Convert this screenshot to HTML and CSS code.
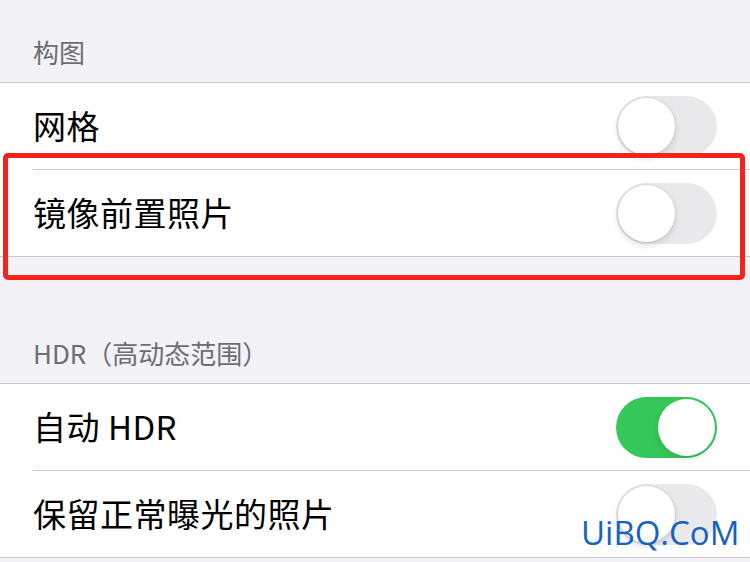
FILE: index.html
```html
<!DOCTYPE html>
<html>
  <head>
    <title>相机设置</title>
    <meta name="viewport" content="width=device-width, initial-scale=1.0">
    <link rel="stylesheet" href="styles.css">
  </head>
  <body>
    <div class="section-title first">构图</div>
    <div class="group">
      <div class="row">
        <span class="label">网格</span>
        <span class="switch"><span class="knob"></span></span>
      </div>
      <div class="row">
        <span class="label">镜像前置照片</span>
        <span class="switch"><span class="knob"></span></span>
      </div>
    </div>

    <div class="section-title">HDR（高动态范围）</div>
    <div class="group">
      <div class="row">
        <span class="label">自动 HDR</span>
        <span class="switch on"><span class="knob"></span></span>
      </div>
      <div class="row">
        <span class="label">保留正常曝光的照片</span>
        <span class="switch"><span class="knob"></span></span>
      </div>
    </div>

    <div class="highlight"></div>
    <div class="watermark">UiBQ.CoM</div>
  </body>
</html>
```

FILE: styles.css
```css
body {
  background-color: #f2f2f7;
  margin: 0;
  padding: 0;
  font-family: "Noto Sans CJK SC", "Noto Sans", sans-serif;
  position: relative;
  height: 562px;
  overflow: hidden;
}
.section-title {
  height: 126px;
  box-sizing: border-box;
  padding: 0 33px 14px;
  display: flex;
  align-items: flex-end;
  font-size: 26px;
  line-height: 32px;
  color: #6d6d72;
}
.section-title.first {
  height: 82px;
}
.group {
  background-color: white;
  border-top: 1px solid #c8c7cc;
  border-bottom: 1px solid #c8c7cc;
}
.row {
  height: 87px;
  box-sizing: border-box;
  margin-left: 33px;
  padding-right: 33px;
  display: flex;
  align-items: center;
  justify-content: space-between;
  border-bottom: 1px solid #c8c7cc;
}
.row:last-child {
  height: 86px;
  border-bottom: none;
}
.label {
  font-size: 33px;
  color: #000;
  letter-spacing: 0.5px;
  padding-bottom: 2px;
}
.switch {
  position: relative;
  width: 101px;
  height: 61px;
  border-radius: 31px;
  background-color: #e9e9eb;
  flex: none;
}
.switch .knob {
  position: absolute;
  top: 2px;
  left: 2px;
  width: 57px;
  height: 57px;
  border-radius: 50%;
  background-color: white;
  box-shadow: 0 3px 7px rgba(0, 0, 0, 0.14), 0 0 0 1px rgba(0, 0, 0, 0.05);
}
.switch.on {
  background-color: #35c759;
}
.switch.on .knob {
  left: 42px;
  box-shadow: 0 3px 7px rgba(0, 0, 0, 0.12);
}
.highlight {
  position: absolute;
  left: 3px;
  top: 153px;
  width: 742px;
  height: 127px;
  box-sizing: border-box;
  border: 5px solid #f5231a;
  border-radius: 5px;
}
.watermark {
  position: absolute;
  left: 581px;
  top: 513px;
  font-family: "Open Sans", sans-serif;
  font-size: 33px;
  line-height: 40px;
  color: #1462c4;
}
```
